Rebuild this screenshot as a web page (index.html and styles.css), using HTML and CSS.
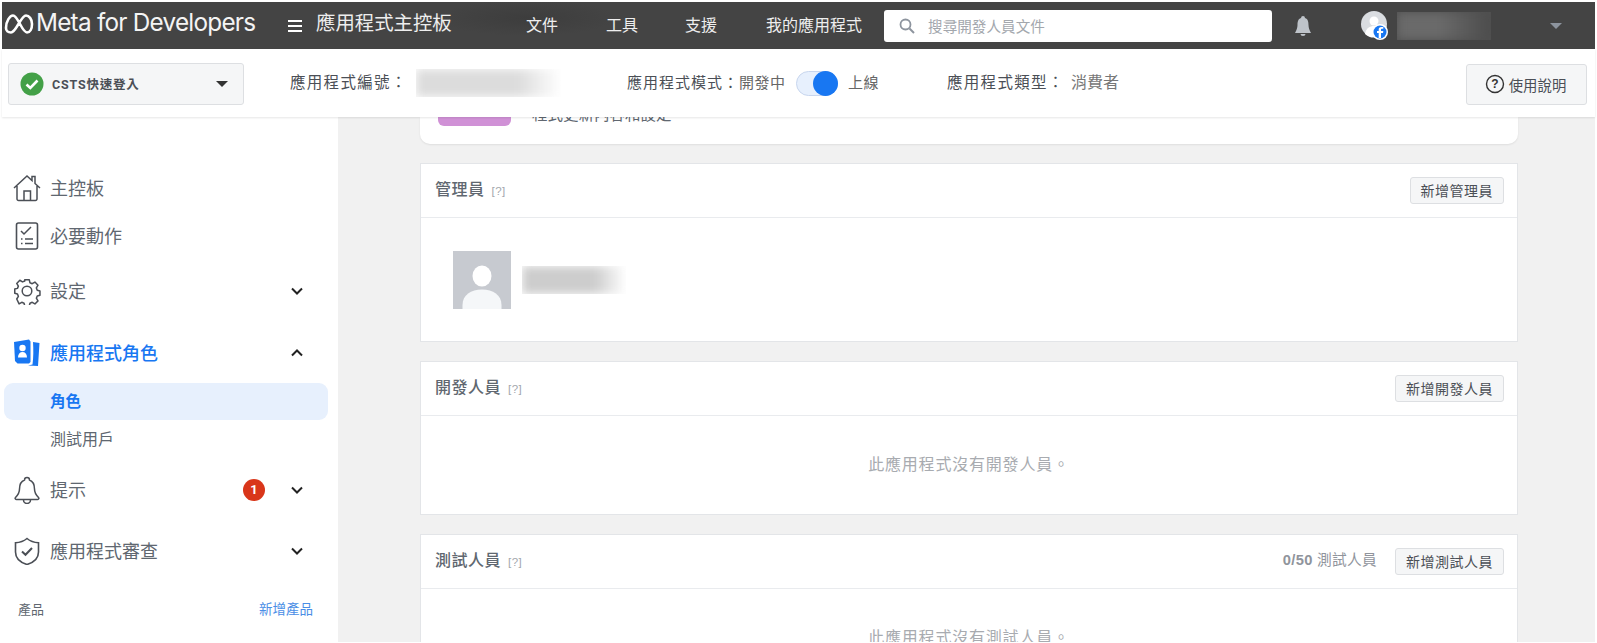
FILE: index.html
```html
<!DOCTYPE html>
<html lang="zh-Hant">
<head>
<meta charset="utf-8">
<title>應用程式角色</title>
<link rel="stylesheet" href="styles.css">
</head>
<body>
<div class="frame">
  <header class="topbar">
    <svg class="meta-logo" viewBox="0 0 30 22" width="30" height="22"><path d="M2 15C2 8 6 2.500 9 2.500C14 2.500 18 19.500 23 19.500C26 19.500 28 16 28 11C28 6 25 2.500 22 2.500C17 2.500 12 19.500 7 19.500C4 19.500 2 18 2 15Z" fill="none" stroke="#fff" stroke-width="2.600"/></svg>
    <span class="brand">Meta for Developers</span>
    <svg class="burger" viewBox="0 0 14 12" width="14" height="12"><path d="M0 1h14M0 6h14M0 11h14" stroke="#fff" stroke-width="2"/></svg>
    <span class="page-title">應用程式主控板</span>
    <nav class="topnav">
      <a class="n1">文件</a><a class="n2">工具</a><a class="n3">支援</a><a class="n4">我的應用程式</a>
    </nav>
    <div class="search">
      <svg viewBox="0 0 16 16" width="16" height="16"><circle cx="6.500" cy="6.500" r="5" fill="none" stroke="#8d949e" stroke-width="1.800"/><path d="M10.500 10.500L15 15" stroke="#8d949e" stroke-width="2"/></svg>
      <span>搜尋開發人員文件</span>
    </div>
    <svg class="bell" viewBox="0 0 20 20" width="20" height="20"><path d="M10 0a2 2 0 0 1 2 2c3 1 3.500 4 3.500 7 0 3 1 5 2.500 8H2c1.500-3 2.500-5 2.500-8 0-3 .5-6 3.500-7a2 2 0 0 1 2-2zM7.500 18h5a2.500 2 0 0 1-5 0z" fill="#bec3c9"/></svg>
    <div class="account">
      <svg viewBox="0 0 30 30" width="30" height="30"><circle cx="14" cy="13" r="13" fill="#dadde1"/><circle cx="14" cy="10" r="4.500" fill="#fff"/><path d="M5 23c1-6 5-8 9-8s8 2 9 8a13 13 0 0 1-18 0z" fill="#fff"/><circle cx="20" cy="21" r="8" fill="#fff"/><circle cx="20" cy="21" r="6.500" fill="#1877f2"/><path d="M21 27v-5h2l.3-2H21v-1.200c0-.7.3-1 1-1h1.300V16h-1.800c-2 0-2.800 1-2.800 2.600V20h-1.700v2h1.700v5z" fill="#fff"/></svg>
    </div>
    <div class="blur-wrap blur-user"><i></i></div>
    <span class="caret caret-grey"></span>
  </header>

  <div class="appbar">
    <div class="app-select">
      <svg viewBox="0 0 24 24" width="24" height="24"><circle cx="12" cy="12" r="11.500" fill="#43a047"/><path d="M6.500 12.500l3.800 3.500 7.200-7.500" fill="none" stroke="#fff" stroke-width="2.600"/></svg>
      <span class="app-name">CSTS快速登入</span>
      <span class="caret caret-dark"></span>
    </div>
    <span class="label label-id">應用程式編號：</span>
    <div class="blur-wrap blur-id"><i></i></div>
    <span class="label label-mode">應用程式模式：<span class="thin">開發中</span></span>
    <span class="toggle"><span class="knob"></span></span>
    <span class="label thin live">上線</span>
    <span class="label label-type">應用程式類型：</span>
    <span class="label thin consumer">消費者</span>
    <button class="help">
      <svg viewBox="0 0 20 20" width="20" height="20"><circle cx="10" cy="10" r="8.500" fill="none" stroke="#333" stroke-width="1.400"/><text x="10" y="14.300" text-anchor="middle" class="help-q">?</text></svg>
      <span>使用說明</span>
    </button>
  </div>

  <div class="body-row">
    <aside class="sidebar">
      <a class="row r-home">
        <svg viewBox="0 0 28 28" width="28" height="28"><path d="M1 14L14 2l5 4.500V2.500h3v7l5 4.500M4 12v13a1.500 1.500 0 0 0 1.500 1.500h17A1.500 1.500 0 0 0 24 25V12M11 26.500V17h6.500v9.500" fill="none" stroke="#4b4f56" stroke-width="1.500"/></svg>
        <span>主控板</span>
      </a>
      <a class="row">
        <svg viewBox="0 0 28 28" width="28" height="28"><rect x="3.500" y="1" width="21" height="26" rx="2" fill="none" stroke="#4b4f56" stroke-width="1.600"/><path d="M8 9l3 3 7-7M8 17h1.500M12 17h8M8 21.500h1.500M12 21.500h8" fill="none" stroke="#4b4f56" stroke-width="1.500"/></svg>
        <span>必要動作</span>
      </a>
      <a class="row r-settings">
        <svg viewBox="0 0 28 28" width="28" height="28"><path d="M11.500 1.500h5l.8 3.500 2.500 1 3-1.800 3.400 3.500-1.800 3 1 2.500 3 .8v4.800l-3 .8-1 2.500 1.800 3-3.400 3.400-3-1.800-2.500 1-.8 3h-5l-.8-3-2.500-1-3 1.800L2.600 23l1.800-3-1-2.500-3-.8V12l3-.8 1-2.500-1.800-3L6 2.200l3 1.800 2.500-1z" transform="translate(1.400 1.300) scale(.9)" fill="none" stroke="#4b4f56" stroke-width="1.700" stroke-linejoin="round"/><circle cx="14" cy="14" r="4.800" fill="none" stroke="#4b4f56" stroke-width="1.500"/></svg>
        <span>設定</span>
        <svg class="chev" viewBox="0 0 12 8" width="12" height="8"><path d="M1 1.500l5 5 5-5" fill="none" stroke="#222" stroke-width="2"/></svg>
      </a>
      <a class="row r-roles active">
        <svg viewBox="0 0 28 28" width="28" height="28"><path d="M1 3l15-2.500 1.500 2V23l-1.500 1.500H4.500L2 22z" fill="#1877f2"/><path d="M20 3l6.500 1L25 27l-10-.5 4.500-1c1-7 1-15 .5-22.500z" fill="#1877f2"/><circle cx="9.500" cy="9" r="3.200" fill="#fff"/><path d="M5 18.500c0-3.500 1.800-5.500 4.500-5.500s4.500 2 4.500 5.500z" fill="#fff"/></svg>
        <span>應用程式角色</span>
        <svg class="chev" viewBox="0 0 12 8" width="12" height="8"><path d="M1 6.500l5-5 5 5" fill="none" stroke="#222" stroke-width="2"/></svg>
      </a>
      <a class="sub sub-active">角色</a>
      <a class="sub">測試用戶</a>
      <a class="row r-hints">
        <svg viewBox="0 0 28 28" width="28" height="28"><path d="M14 1.500a2.500 2.500 0 0 1 2.500 2.500c4 1.500 5 5 5 9 0 4 2 6.500 4 8.500 1 1-.2 2-1 2H3.500c-.8 0-2-1-1-2 2-2 4-4.500 4-8.500 0-4 1-7.500 5-9A2.500 2.500 0 0 1 14 1.500zM10.500 24a3.500 3.500 0 0 0 7 0" fill="none" stroke="#4b4f56" stroke-width="1.500"/></svg>
        <span>提示</span>
        <b class="badge">1</b>
        <svg class="chev" viewBox="0 0 12 8" width="12" height="8"><path d="M1 1.500l5 5 5-5" fill="none" stroke="#222" stroke-width="2"/></svg>
      </a>
      <a class="row r-review">
        <svg viewBox="0 0 28 28" width="28" height="28"><path d="M14 1.500c3 2.500 7 4 11.500 4.300V15c0 6-5 10.500-11.500 12.500C7.500 25.500 2.500 21 2.500 15V5.800C7 5.500 11 4 14 1.500z" fill="none" stroke="#4b4f56" stroke-width="1.600"/><path d="M9 14.500l3.500 3.300L19 11" fill="none" stroke="#4b4f56" stroke-width="2"/></svg>
        <span>應用程式審查</span>
        <svg class="chev" viewBox="0 0 12 8" width="12" height="8"><path d="M1 1.500l5 5 5-5" fill="none" stroke="#222" stroke-width="2"/></svg>
      </a>
      <div class="products"><span>產品</span><a>新增產品</a></div>
    </aside>

    <main class="content">
      <div class="card-top">
        <div class="card-inner">
          <div class="purple"></div>
          <p>程式更新內容和設定</p>
        </div>
      </div>

      <section class="panel panel-admin">
        <div class="panel-head">
          <h2>管理員 <small>[?]</small></h2>
          <button class="add">新增管理員</button>
        </div>
        <div class="admin-body">
          <div class="avatar">
            <svg viewBox="0 0 58 58" width="58" height="58"><rect width="58" height="58" fill="#c7cad0"/><ellipse cx="29" cy="25" rx="9.500" ry="10.500" fill="#fff"/><path d="M9.500 58V54C9.500 44 18 38.500 29 38.500S48.500 44 48.500 54V58z" fill="#f5f7f9"/></svg>
          </div>
          <div class="blur-wrap blur-name"><i></i></div>
        </div>
      </section>

      <section class="panel panel-dev">
        <div class="panel-head">
          <h2>開發人員 <small>[?]</small></h2>
          <button class="add">新增開發人員</button>
        </div>
        <p class="empty">此應用程式沒有開發人員。</p>
      </section>

      <section class="panel panel-test">
        <div class="panel-head">
          <h2>測試人員 <small>[?]</small></h2>
          <span class="count"><b>0/50</b> 測試人員</span>
          <button class="add">新增測試人員</button>
        </div>
        <p class="empty">此應用程式沒有測試人員。</p>
      </section>
    </main>
  </div>
</div>
</body>
</html>
```
FILE: styles.css
```css
* { box-sizing: border-box; }
html, body { margin: 0; height: 643px; overflow: hidden; background: #fff; }
body { font-family: "Liberation Sans", "Noto Sans CJK TC", sans-serif; color: #606770; }
a { display: block; }
p, h2 { margin: 0; }

.frame { height: 643px; padding: 2px 2px 1px; display: flex; flex-direction: column; }

/* top bar */
.topbar {
  height: 47px; flex: none; display: flex; align-items: center; color: #fff;
  background: radial-gradient(ellipse 90px 18px at 525px 16px, #3d3d3d, #444 100%), #444;
}
.meta-logo { margin: 0 0 4px 2px; flex: none; }
.brand { margin: 0 0 7px 2px; font: 400 24.300px/1 Inter, sans-serif; letter-spacing: -.75px; width: 223px; white-space: nowrap; color: #f4f4f4; }
.burger { margin: 0 0 0 29px; flex: none; }
.page-title { margin: 0 0 9px 14px; font-size: 19.400px; white-space: nowrap; color: #eee; width: 136px; }
.topnav { display: flex; font-size: 16px; color: #eee; white-space: nowrap; margin-bottom: 4px; }
.topnav .n1 { margin-left: 74px; }
.topnav .n2 { margin-left: 48px; }
.topnav .n3 { margin-left: 47px; }
.topnav .n4 { margin-left: 49px; }
.search {
  margin: 1px 0 0 22px; width: 388px; height: 32px; background: #fff; border-radius: 3px;
  display: flex; align-items: center; padding-left: 15px; gap: 13px; color: #a3a7ad; font-size: 14.600px; flex: none;
}
.search span { padding-bottom: 2px; }
.bell { margin: 1px 0 0 21px; flex: none; }
.account { margin: 1px 0 0 47px; height: 30px; flex: none; }
.blur-wrap { overflow: hidden; flex: none; }
.blur-wrap i { display: block; width: 100%; height: 100%; filter: blur(5px); }
.blur-user { margin-left: 7px; width: 94px; height: 28px; background: #505050; }
.blur-user i { background: linear-gradient(90deg, #6a6a6a 0 45%, #4c4c4c 100%); }
.caret { display: block; width: 0; height: 0; border-style: solid; border-width: 6px 6px 0; border-color: transparent; }
.caret-grey { margin-left: 59px; border-top-color: #8d949e; flex: none; }
.caret-dark { margin-left: auto; margin-right: 15px; border-top-color: #333; }

/* app bar */
.appbar {
  height: 68px; flex: none; display: flex; align-items: center; background: #fff;
  position: relative; z-index: 2; box-shadow: 0 1px 2px rgba(0, 0, 0, .1);
}
.app-select {
  margin: 1px 0 0 6px; width: 236px; height: 42px; background: #f5f6f7; border: 1px solid #dddfe2; border-radius: 3px;
  display: flex; align-items: center; padding-left: 11px; gap: 8px; flex: none;
}
.app-name { font: 700 12.500px "Roboto", "Noto Sans CJK TC", sans-serif; color: #4b4f56; letter-spacing: .8px; }
.label { font-size: 15px; white-space: nowrap; color: #4b4f56; flex: none; margin-bottom: 4px; }
.label-id { margin-left: 46px; font-size: 15.500px; letter-spacing: 1.300px; width: 126px; }
.blur-id { width: 145px; height: 28px; }
.blur-id i { background: linear-gradient(90deg, #dcdcdc 0 70%, #fff 100%); }
.label-mode { margin-left: 66px; letter-spacing: 1px; width: 169px; }
.thin { color: #666; font-size: 15px; letter-spacing: .5px; }
.toggle {
  width: 42px; height: 25px; border-radius: 13px; background: #e7f0fd; border: 1px solid #c8d6ee;
  position: relative; flex: none;
}
.knob { position: absolute; right: -1px; top: -1px; width: 25px; height: 25px; border-radius: 50%; background: #1877f2; }
.live { margin-left: 10px; width: 33px; }
.label-type { margin-left: 66px; font-size: 15.500px; letter-spacing: 1.300px; width: 125px; }
.consumer { color: #777; font-size: 16px; letter-spacing: 0; margin-left: -1px; }
.help {
  margin: 2px 8px 0 auto; width: 121px; height: 41px; background: #f5f6f7; border: 1px solid #dddfe2; border-radius: 3px;
  display: flex; align-items: center; justify-content: center; gap: 4px; font: 14.400px "Liberation Sans", "Noto Sans CJK TC", sans-serif; color: #4b4f56; padding: 0 2px 0 0;
}
.help-q { font: 700 12px "Liberation Sans", sans-serif; fill: #333; }

/* layout below bars */
.body-row { flex: 1; min-height: 0; display: flex; }
.sidebar { width: 336px; flex: none; background: #fff; padding-top: 47px; }
.content { flex: 1; min-width: 0; background: #f1f1f1; overflow: hidden; padding: 0 77px 0 82px; }

/* sidebar */
.row { height: 48px; padding-left: 11px; padding-right: 35px; display: flex; align-items: center; gap: 9px; font-size: 18px; color: #606770; }
.row > span { white-space: nowrap; padding-bottom: 2px; }
.row > svg:first-child { flex: none; }
.chev { margin-left: auto; flex: none; }
.r-settings { margin-top: 7px; }
.r-roles { margin-top: 14px; }
.active { color: #1877f2; font-weight: 500; }
.sub { height: 37px; margin-left: 2px; margin-right: 10px; padding-left: 46px; line-height: 39px; font-size: 16px; color: #606770; }
.sub-active { margin-top: 6px; font-size: 15.500px; background: #e7f0fd; border-radius: 9px; color: #1877f2; font-weight: 700; line-height: 38px; }
.r-hints { margin-top: 9px; }
.r-review { margin-top: 13px; }
.badge {
  margin-left: auto; width: 22px; height: 22px; border-radius: 50%; background: #d9361a; color: #fff;
  font: 700 13px/22px Roboto, sans-serif; text-align: center;
}
.r-hints .chev { margin-left: 17px; }
.products { margin-top: 21px; padding: 0 25px 0 16px; display: flex; justify-content: space-between; align-items: center; height: 24px; font-size: 13px; }
.products a { color: #4a8ee6; font-size: 13.500px; }

/* clipped card */
.card-top {
  height: 27px; background: #fff; border-radius: 0 0 10px 10px; box-shadow: 0 1px 2px rgba(0, 0, 0, .08); overflow: hidden;
}
.card-inner { display: flex; margin-top: -12px; padding-left: 18px; height: 50px; }
.purple { width: 73px; height: 21px; background: #d091d6; border-radius: 0 0 6px 6px; flex: none; }
.card-inner p { margin-left: 21px; font-size: 15.500px; line-height: 20px; color: #606770; white-space: nowrap; }

/* panels */
.panel { background: #fff; border: 1px solid #e3e5e8; overflow: hidden; }
.panel-admin { margin-top: 19px; height: 179px; }
.panel-dev { margin-top: 19px; height: 154px; }
.panel-test { margin-top: 19px; height: 200px; }
.panel-head { height: 54px; padding: 0 13px 0 14px; display: flex; align-items: center; border-bottom: 1px solid #e9ebee; }
.panel-head h2 { font-size: 16px; font-weight: 500; color: #606770; letter-spacing: .5px; margin: 0 auto 5px 0; white-space: nowrap; }
.panel-head small { font-size: 11.500px; font-weight: 400; color: #a3a7ad; margin-left: 2px; letter-spacing: .5px; }
.add {
  height: 27px; padding: 0 10px; background: #f5f6f7; border: 1px solid #dddfe2; border-radius: 3px;
  font: 14px/1 "Liberation Sans", "Noto Sans CJK TC", sans-serif; color: #4b4f56; letter-spacing: .5px; white-space: nowrap;
}
.admin-body { display: flex; align-items: center; padding: 33px 0 0 32px; gap: 11px; }
.avatar { width: 58px; height: 58px; flex: none; }
.blur-name { width: 104px; height: 28px; }
.blur-name i { background: linear-gradient(90deg, #cdcdcd 0 70%, #fff 100%); }
.count { margin: 0 18px 6px 0; font-size: 14.700px; letter-spacing: .3px; color: #90949c; }
.empty { text-align: center; font-size: 16px; color: #a8abb0; letter-spacing: .8px; padding-top: 37px; line-height: 24px; }
```
